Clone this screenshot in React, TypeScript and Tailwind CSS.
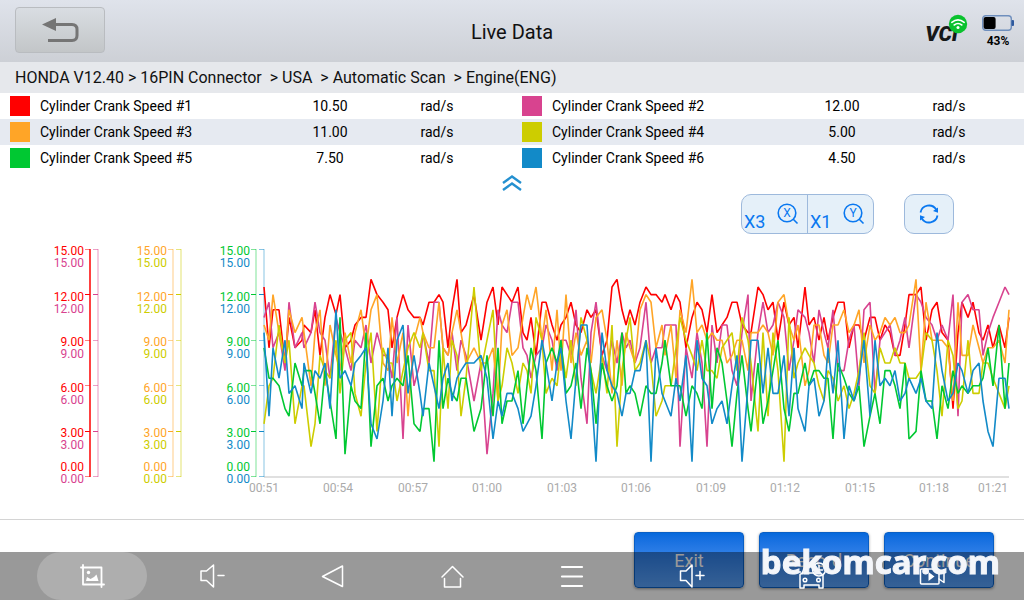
import type { ReactNode } from 'react';

type Series = {
  name: string;
  value: string;
  unit: string;
  color: string;
  swatch: string;
  data: number[];
};

// horizontal position of every sample, in chart units
const sampleX = [
  264, 269, 273, 279, 285, 289, 295, 302, 304, 311, 315, 320, 325, 330, 336, 340, 345, 351, 355, 361, 366, 371, 377, 383, 388, 392, 397, 403, 408, 414, 420, 423, 429, 434, 439, 443, 448, 452,
  457, 461, 466, 474, 481, 487, 493, 498, 502, 507, 512, 518, 523, 527, 531, 536, 542, 546, 552, 557, 561, 566, 571, 576, 581, 587, 591, 596, 602, 607, 612, 617, 622, 626, 630, 635,
  640, 646, 651, 656, 662, 665, 671, 676, 680, 686, 692, 697, 702, 707, 712, 717, 722, 727, 732, 737, 742, 748, 751, 758, 763, 768, 773, 778, 784, 789, 794, 798, 805, 809, 814, 819, 824, 828,
  833, 838, 844, 849, 854, 859, 864, 870, 875, 880, 885, 890, 895, 900, 905, 909, 916, 921, 926, 932, 937, 942, 948, 953, 958, 962, 968, 973, 979, 983, 988, 993, 999, 1005, 1009,
];

const series: Series[] = [
  {
    name: 'Cylinder Crank Speed #1',
    value: '10.50',
    unit: 'rad/s',
    color: '#ff0000',
    swatch: 'bg-[#ff0000]',
    data: [
      12.5, 8.5, 11, 11, 7.5, 10.5, 8.5, 9, 10, 9.5, 11, 8, 10.5, 12, 10.7, 12, 8.5, 9, 10, 10.5, 10.5, 13, 12, 11.5, 11, 8.5, 10.5, 12, 11, 10.5, 10.5, 10, 11.5, 11.5, 12, 11.5, 8.5, 11,
      13, 9.5, 10, 12, 9, 11.5, 12.5, 10, 12.5, 12, 11.5, 12.5, 9.5, 9, 10.5, 8, 11.5, 11.5, 10, 9, 10, 10.5, 11.5, 10, 9.5, 11, 10.5, 11, 8, 9, 12.5, 13, 11, 10, 11, 10,
      11.5, 12.5, 12, 12, 11.5, 12, 11, 12, 11.5, 8.5, 10.5, 11.5, 11, 9.5, 12, 9.5, 10, 10.5, 11.5, 11.5, 10, 9.5, 9.5, 12.5, 12, 11, 11.5, 9, 11.5, 10, 10.5, 8.5, 12.5, 10, 10.5, 9, 10.5, 9,
      10.5, 11.5, 11.5, 8.5, 10, 10, 9, 10.5, 10.5, 9, 10, 9.5, 8, 8, 10, 12, 12, 12.5, 9, 11, 11.5, 9.5, 9, 4.5, 9.5, 11.5, 10.5, 11.5, 9.5, 9, 10, 8.5, 10, 8.5, 10.5,
    ],
  },
  {
    name: 'Cylinder Crank Speed #2',
    value: '12.00',
    unit: 'rad/s',
    color: '#d8438f',
    swatch: 'bg-[#d8438f]',
    data: [
      10.5, 11.5, 8.5, 9.5, 7, 11.5, 8.5, 9.5, 8.5, 9.5, 11.5, 9.5, 9, 6.5, 10.5, 9.5, 8.5, 7, 9, 8.5, 10, 7.5, 9.5, 8, 8, 6.5, 10.5, 2.5, 10, 6, 7.5, 9.5, 7.5, 11.5, 11.5, 8.5, 8, 9.5,
      7, 9, 8, 5, 7.5, 1.5, 5.5, 11, 10, 9.5, 11.5, 11.5, 8.5, 8, 6.5, 8, 8.5, 10, 9, 7, 9, 9, 8, 11, 6.5, 3.5, 9.5, 11.5, 8, 7, 9, 7.5, 9.5, 8.5, 9, 7.5,
      8.5, 11.5, 7.5, 8.5, 8.5, 10, 10, 10, 2, 8.5, 6.5, 9.5, 7.5, 2, 10, 7.5, 10, 10, 7, 6, 9.5, 12, 5, 9.5, 11.5, 9.5, 10, 11.5, 10.5, 7, 9, 11, 10.5, 9.5, 7.5, 11, 9.5, 8.5,
      11, 7, 7, 9, 10, 6, 11, 11.5, 5.5, 9, 9.5, 10, 8, 9, 10.5, 8.5, 12, 11.5, 10.5, 10, 9, 10, 9, 12, 4, 11.5, 12, 11, 11, 8, 9.5, 10.5, 11.5, 12.5, 12,
    ],
  },
  {
    name: 'Cylinder Crank Speed #3',
    value: '11.00',
    unit: 'rad/s',
    color: '#ffa527',
    swatch: 'bg-[#ffa527]',
    data: [
      10, 9, 12, 9.5, 7.5, 11, 9.5, 10.5, 9.5, 6, 9.5, 11, 6, 10, 8, 7, 9.5, 7.5, 9.5, 11, 8.5, 11, 12, 7.5, 7, 10.5, 7.5, 9.5, 4, 9, 10.5, 9.5, 8.5, 8.5, 11.5, 8.5, 8, 9.5,
      11, 9.5, 7.5, 8.5, 7.5, 7.5, 8.5, 5, 10, 11, 8, 8.5, 10.5, 12, 11, 12.5, 9, 11, 7, 11, 7, 12, 7.5, 9.5, 8, 9, 7.5, 10.5, 11, 9, 5.5, 9, 6, 9.5, 8.5, 7.5,
      11, 12, 11.5, 8.5, 10, 8, 10, 6.5, 11, 9.5, 13, 9.5, 10, 9, 9.5, 9, 9, 7.5, 8, 9, 9, 7, 9.5, 9.5, 10, 9.5, 8, 11.5, 12, 10, 9, 10, 6, 7, 10, 10, 8, 7.5,
      10, 10, 11, 9.5, 10, 11, 7.5, 10, 9, 9.5, 10.5, 10, 10.5, 9.5, 9.5, 10, 13, 7, 11.5, 9, 9, 9, 8.5, 5, 11.5, 8, 8, 10, 8.5, 7.5, 8.5, 8.5, 9, 7.5, 11,
    ],
  },
  {
    name: 'Cylinder Crank Speed #4',
    value: '5.00',
    unit: 'rad/s',
    color: '#cdcd00',
    swatch: 'bg-[#cdcd00]',
    data: [
      3.5, 6, 6.5, 10, 7.5, 9, 3.5, 6, 6, 2, 3.5, 8, 7, 6.5, 9, 5.5, 9, 9.5, 5.5, 4, 7.5, 9.5, 3, 8.5, 7.5, 7.5, 5, 7, 8.5, 9.5, 8.5, 9.5, 7, 7, 2, 8.5, 4.5, 9,
      8, 4, 6.5, 12.5, 7, 9, 11, 5, 6, 8.5, 7.5, 5.5, 7.5, 7, 5.5, 10.5, 9, 5.5, 6.5, 6, 8.5, 6.5, 9, 6, 10.5, 9, 7, 5.5, 8, 5.5, 10, 2, 7, 9, 10.5, 7,
      7.5, 9, 7.5, 4, 5, 6, 6, 8.5, 10.5, 9, 8, 7, 9, 7, 7, 6.5, 8.5, 9, 9.5, 7, 10.5, 9, 7.5, 3, 9.5, 4, 9.5, 7, 1, 10.5, 6.5, 7.5, 8.5, 8, 7.5, 6, 5, 7,
      6.5, 5, 6, 4.5, 5.5, 7, 9.5, 6, 5.5, 8.5, 7.5, 7.5, 8.5, 7.5, 7.5, 6.5, 6.5, 7, 9.5, 9, 7, 4, 9, 8, 4.5, 5, 9, 5.5, 5.5, 7.5, 7.5, 6.5, 5.5, 4.5, 6,
    ],
  },
  {
    name: 'Cylinder Crank Speed #5',
    value: '7.50',
    unit: 'rad/s',
    color: '#00c832',
    swatch: 'bg-[#00c832]',
    data: [
      8.5, 6.5, 6.5, 6, 4.5, 4, 7.5, 6, 7, 7, 5.5, 3.5, 7, 5, 2.5, 10.5, 1.5, 6, 5, 4.5, 9.5, 2, 6, 6.5, 5, 6, 6.5, 6, 8, 3.5, 3, 4.5, 4.5, 1, 9, 4.5, 6.5, 5.5,
      5, 6.5, 6.5, 3, 4.5, 8, 4, 8.5, 3.5, 5, 5, 7, 3.5, 6, 8.5, 7, 2.5, 7.5, 8.5, 7.5, 9, 5.5, 6, 7.5, 4.5, 8.5, 7, 3.5, 7.5, 6, 5, 6, 9.5, 5.5, 6, 5.5,
      4, 6, 5.5, 5.5, 7.5, 9, 6, 6, 6, 4, 6, 5.5, 4.5, 9.5, 4.5, 8.5, 7.5, 5, 2, 5.5, 8, 4.5, 3, 7.5, 3.5, 5, 7, 9, 4.5, 3, 5.5, 5.5, 7.5, 6, 7, 7, 6.5, 6.5,
      2.5, 7.5, 6.5, 5.5, 5, 6, 2, 4, 5.5, 3.5, 7, 7, 6, 4.5, 7.5, 2.5, 3, 7, 5, 5, 2.5, 6, 4.5, 7, 5.5, 6, 5.5, 6, 6, 6.5, 8.5, 6, 10, 4.5, 7.5,
    ],
  },
  {
    name: 'Cylinder Crank Speed #6',
    value: '4.50',
    unit: 'rad/s',
    color: '#128ac8',
    swatch: 'bg-[#128ac8]',
    data: [
      9.5, 4, 8.5, 6.5, 9, 5.5, 6, 4.5, 7.5, 5.5, 7, 6.5, 7.5, 4.5, 11, 6.5, 7, 6, 7.5, 8, 8.5, 3.5, 2.5, 5, 8.5, 4, 9, 10, 5.5, 8, 5.5, 4, 7.5, 6, 4.5, 6.5, 7.5, 5,
      6.5, 7, 7.5, 7.5, 8, 6.5, 2.5, 5, 4, 5.5, 5.5, 4.5, 3, 3.5, 4, 6, 9, 7.5, 5, 7.5, 8.5, 5, 2.5, 6.5, 10, 10, 6, 1, 9.5, 7, 6, 5.5, 4, 5.5, 5.5, 7,
      7, 9, 1, 8.5, 5.5, 5, 4, 6.5, 5, 8, 1, 9, 6.5, 6, 3.5, 4.5, 5, 3.5, 6, 8, 1, 6, 9, 9, 5.5, 8.5, 5.5, 5.5, 8, 4, 8.5, 4.5, 3, 6, 6.5, 4, 5, 8.5,
      5.5, 9, 2.5, 6, 5, 6.5, 9, 4, 9, 6, 6.5, 6, 7, 5, 5.5, 6.5, 5.5, 6.5, 5, 4.5, 9.5, 7, 5, 5.5, 7.5, 7, 5.5, 7, 7.5, 5, 3, 2, 6.5, 6.5, 4.5],
  },
];

const axes = [
  { right: 84, lines: [90, 98], opacity: [0.75, 0.28], pair: [series[0], series[1]] },
  { right: 167, lines: [173, 181], opacity: [0.28, 0.28], pair: [series[2], series[3]] },
  { right: 250, lines: [256, 264], opacity: [0.25, 0.25], pair: [series[4], series[5]] },
];

const scaleLabels = [
  { text: '15.00', y: 255, tick: 249.5 },
  { text: '12.00', y: 301, tick: 294.5 },
  { text: '9.00', y: 346, tick: 340.5 },
  { text: '6.00', y: 392, tick: 385.5 },
  { text: '3.00', y: 437, tick: 431.5 },
  { text: '0.00', y: 471, tick: 476.5 },
];

const times = [
  { text: '00:51', x: 264 },
  { text: '00:54', x: 338 },
  { text: '00:57', x: 413 },
  { text: '01:00', x: 487 },
  { text: '01:03', x: 562 },
  { text: '01:06', x: 636 },
  { text: '01:09', x: 711 },
  { text: '01:12', x: 785 },
  { text: '01:15', x: 860 },
  { text: '01:18', x: 934 },
  { text: '01:21', x: 993 },
];

const toPoints = (data: number[]) =>
  data.map((v, i) => `${sampleX[i]},${(477 - v * 15.2).toFixed(1)}`).join(' ');

function Header() {
  return (
    <header className="grid h-[62px] grid-cols-3 items-center bg-gradient-to-b from-[#dfe3eb] to-[#cdd0d6]">
      <div className="pb-0.5 pl-[15px]">
        <button
          type="button"
          aria-label="Back"
          className="flex h-[46px] w-[90px] items-center justify-center rounded border border-[#b9bcc0] bg-gradient-to-b from-[#d9dde2] to-[#c3c6c8]"
        >
          <svg width="38" height="26" viewBox="0 0 38 26" fill="none">
            <path d="M1 7.500 15 1v13z" fill="#757575" />
            <path d="M14 7.500h17q5 0 5 5v6q0 5-5 5H7" stroke="#757575" strokeWidth="3" />
          </svg>
        </button>
      </div>
      <h1 className="pt-0.5 text-center text-xl text-[#111]">Live Data</h1>
      <div className="flex items-center justify-end gap-[14px] pr-[10px]">
        <div className="relative pt-2 pr-[10px]">
          <span className="text-[21px] leading-6 font-black text-[#161819] italic">VCI</span>
          <svg className="absolute top-0 right-0" width="20" height="20" viewBox="0 0 20 20" fill="none">
            <circle cx="10" cy="10" r="9.200" fill="#0ac22e" />
            <path d="M3.800 8.300q6.200-5 12.400 0M6.200 11q3.800-3 7.600 0" stroke="#fff" strokeWidth="1.600" strokeLinecap="round" />
            <circle cx="10" cy="13.400" r="1.500" fill="#fff" />
          </svg>
        </div>
        <div className="flex flex-col items-center gap-0.5 pt-0.5">
          <svg width="32" height="16" viewBox="0 0 32 16" fill="none">
            <rect x="0.700" y="0.700" width="28.600" height="14.600" rx="3" stroke="#6f8fbd" strokeWidth="1.400" />
            <rect x="1.600" y="2" width="12" height="12" rx="2" fill="#000" />
            <rect x="29.500" y="5" width="2.500" height="6" rx="1" fill="#2f5a9e" />
          </svg>
          <span className="text-[12px] leading-4 font-bold text-black">43%</span>
        </div>
      </div>
    </header>
  );
}

function ValueTable() {
  const rows = [0, 2, 4].map((i) => [series[i], series[i + 1]]);
  return (
    <table className="w-full table-fixed text-sm text-black">
      <colgroup>
        <col className="w-10" />
        <col />
        <col className="w-[120px]" />
        <col className="w-[122px]" />
        <col className="w-10" />
        <col />
        <col className="w-[120px]" />
        <col className="w-[122px]" />
      </colgroup>
      <tbody>
        {rows.map((row) => (
          <tr key={row[0].name} className="h-[26px] even:bg-[#e6eaf1]">
            {row.map((s) => [
              <td key={`${s.name}-c`} className="p-0 pl-[10px]">
                <div className={`size-5 ${s.swatch}`} />
              </td>,
              <td key={`${s.name}-n`} className="p-0">{s.name}</td>,
              <td key={`${s.name}-v`} className="p-0 text-center">{s.value}</td>,
              <td key={`${s.name}-u`} className="p-0 pr-7 text-center">{s.unit}</td>,
            ])}
          </tr>
        ))}
      </tbody>
    </table>
  );
}

function ZoomIcon({ letter }: { letter: string }) {
  return (
    <svg width="22" height="22" viewBox="0 0 22 22" fill="none">
      <circle cx="10" cy="10" r="8.800" stroke="#0a78f0" strokeWidth="1.600" />
      <path d="m16 16 4.500 4.500" stroke="#0a78f0" strokeWidth="1.600" />
      <text x="10" y="14" textAnchor="middle" fontSize="12" fill="#0a78f0">{letter}</text>
    </svg>
  );
}

function Toolbar() {
  return (
    <div className="flex justify-end gap-[30px] pr-[70px] text-[#0a78f0]">
      <div className="flex h-10 divide-x divide-[#9db9dc] overflow-hidden rounded-[10px] border border-[#9db9dc] bg-[#e5f0f9]">
        <button type="button" className="flex w-[66px] items-start justify-between pr-2 pl-0.5">
          <span className="self-end text-lg leading-[22px]">X3</span>
          <span className="pt-2"><ZoomIcon letter="X" /></span>
        </button>
        <button type="button" className="flex w-[65px] items-start justify-between pr-2 pl-0.5">
          <span className="self-end text-lg leading-[22px]">X1</span>
          <span className="pt-2"><ZoomIcon letter="Y" /></span>
        </button>
      </div>
      <button
        type="button"
        aria-label="Reset zoom"
        className="flex h-10 w-[50px] items-center justify-center rounded-[10px] border border-[#9db9dc] bg-[#e5f0f9]"
      >
        <svg width="20" height="20" viewBox="0 0 20 20" fill="none">
          <path d="M1.500 8.500A8.600 8.600 0 0 1 17.200 5.500M18.500 11.500A8.600 8.600 0 0 1 2.800 14.500" stroke="#0a78f0" strokeWidth="1.800" />
          <path d="M19 3.500v5.200l-5-1.700zM1 16.500v-5.200L6 13z" fill="#0a78f0" />
        </svg>
      </button>
    </div>
  );
}

function Chart() {
  return (
    <svg className="block h-auto w-full" viewBox="0 240 1024 260" fill="none" role="img" aria-label="Cylinder crank speed chart">
      <path d="M264 477h745" stroke="#e0e0e0" strokeWidth="2" />
      {axes.map((axis) =>
        axis.pair.map((s, i) => (
          <g key={s.name}>
            <path d={`M${axis.lines[i]} 249v228`} stroke={s.color} strokeWidth="2" opacity={axis.opacity[i]} />
            {scaleLabels.map((l, n) => (
              <g key={l.text}>
                <path
                  d={`M${axis.lines[i] - 5} ${l.tick}h5`}
                  stroke={s.color}
                  opacity={n === 1 || n === 4 ? 1 : 0.5}
                />
                <text x={axis.right} y={l.y + i * 12} textAnchor="end" fontSize="12" fill={s.color}>
                  {l.text}
                </text>
              </g>
            ))}
          </g>
        ))
      )}
      {series.map((s) => (
        <polyline key={s.name} points={toPoints(s.data)} stroke={s.color} strokeWidth="1.600" strokeLinejoin="bevel" />
      ))}
      {times.map((t) => (
        <text key={t.text} x={t.x} y="492" textAnchor="middle" fontSize="12" fill="#aaaaaa">
          {t.text}
        </text>
      ))}
    </svg>
  );
}

function NavIcon({ children }: { children: ReactNode }) {
  return (
    <svg
      width="28"
      height="28"
      viewBox="0 0 28 28"
      fill="none"
      stroke="#fff"
      strokeWidth="1.500"
      strokeLinejoin="round"
      strokeLinecap="round"
    >
      {children}
    </svg>
  );
}

const navItems = [
  {
    label: 'Screenshot',
    icon: (
      <>
        <path d="M5 3v19.500h21M3 5.500h20.500V25" strokeWidth="1.800" />
        <path d="m8 19 1-4 3.500 2 3.500-2 2.500-2.500L20.500 19z" fill="#fff" stroke="none" />
        <circle cx="10.500" cy="10.500" r="1.700" fill="#fff" stroke="none" />
      </>
    ),
  },
  { label: 'Volume down', icon: <path d="M3 9h5.500L15.500 3v22L8.500 18.500H3zM20 13.500h6" /> },
  { label: 'Back', icon: <path d="M24.500 4v20.500L4.500 14.500z" /> },
  { label: 'Home', icon: <path d="M4 15 14.500 4.500 25 15M6.500 16.500v8.500h16v-8.500" /> },
  { label: 'Menu', icon: <path d="M4 5h20M4 14.500h20M4 24h20" strokeWidth="2.200" /> },
  { label: 'Volume up', icon: <path d="M2.500 9H8l6-6v22l-6-6.500H2.500zM18 13.500h8M22 9.500v8" /> },
  {
    label: 'Vehicle',
    icon: (
      <>
        <path d="M4 12 6.500 5q.5-1.500 2-1.500H14M2 12.500 4 11h18l3 2v13h-4v-3H6v3H2zM0 10h2.500" />
        <circle cx="7" cy="18" r="1.800" />
        <circle cx="20.500" cy="18" r="1.800" />
        <circle cx="21" cy="7.500" r="6.500" />
        <path d="M21 3.500v4.500h3.500" />
      </>
    ),
  },
  {
    label: 'Screen recorder',
    icon: (
      <>
        <rect x="2.500" y="7" width="18.500" height="15" rx="1" />
        <path d="m21 12 5-4.500v13L21 17" />
        <path d="m10.500 10 6 4.500-6 4.500z" fill="#fff" stroke="none" />
      </>
    ),
  },
];

export default function App() {
  return (
    <div className="flex min-h-screen flex-col bg-white font-['Roboto',sans-serif]">
      <Header />
      <nav className="h-[31px] bg-[#e6e8ec] px-[15px] text-base leading-[31px] whitespace-pre text-[#111]">
        {'HONDA V12.40 > 16PIN Connector  > USA  > Automatic Scan  > Engine(ENG)'}
      </nav>
      <ValueTable />
      <div className="flex h-[23px] justify-center">
        <button type="button" aria-label="Collapse" className="flex items-center">
          <svg width="20" height="18" viewBox="0 0 20 18" fill="none">
            <path d="m1 9 9-6.500L19 9M1 16l9-6.500 9 6.500" stroke="#2490d0" strokeWidth="2.400" />
          </svg>
        </button>
      </div>
      <Toolbar />
      <main className="pt-1.5">
        <Chart />
      </main>

      <footer className="mt-auto flex h-[81px] justify-end gap-[15px] border-t border-[#d4d4d4] pt-3 pr-[30px]">
        {['Exit', 'Record', 'Continue'].map((label) => (
          <button
            key={label}
            type="button"
            className="h-14 w-[110px] rounded border border-[#0a5fc4] bg-gradient-to-b from-[#0468dc] to-[#5aa2fa] pt-0.5 text-lg text-white shadow-[0_1px_3px_rgba(0,0,0,0.4)]"
          >
            {label}
          </button>
        ))}
      </footer>

      {/* system bar over the app */}
      <div className="fixed inset-x-0 bottom-0 flex h-12 bg-black/40 px-8">
        {navItems.map((item, i) => (
          <div key={item.label} className="flex flex-1 justify-center">
            <button
              type="button"
              aria-label={item.label}
              className={`flex h-12 w-[110px] items-center justify-center rounded-full ${i === 0 ? 'bg-white/20' : ''}`}
            >
              <NavIcon>{item.icon}</NavIcon>
            </button>
          </div>
        ))}
      </div>
      <div className="pointer-events-none fixed right-6 bottom-4 font-['Noto_Sans',sans-serif] text-[33px] leading-[44px] font-bold text-[#f4f6fa] [-webkit-text-stroke:1px_#f4f6fa]">
        bekomcar.com
      </div>
    </div>
  );
}
